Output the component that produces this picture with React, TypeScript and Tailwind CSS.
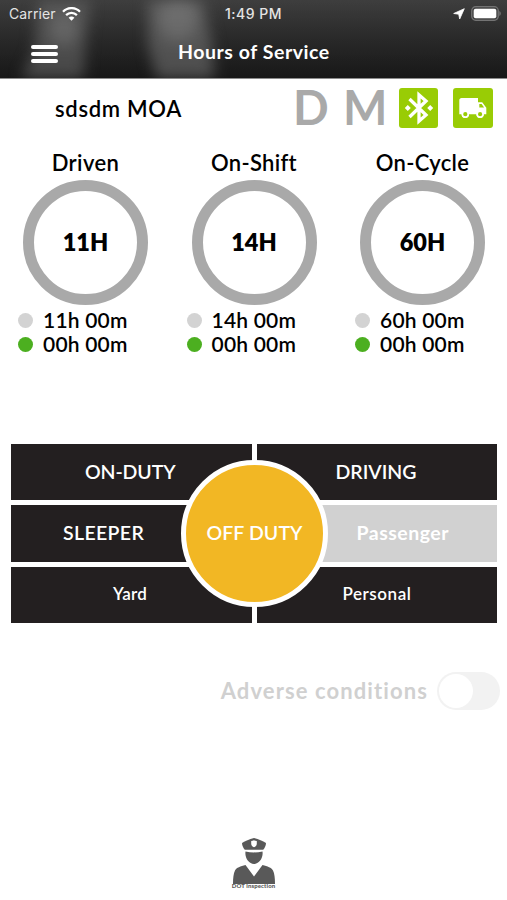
import { useState } from 'react'
import clsx from 'clsx'

type Gauge = {
    title: string
    titleClass: string
    limit: string
    remaining: string
    used: string
}

const gauges: Gauge[] = [
    { title: 'Driven', titleClass: 'tracking-[0.4px]', limit: '11H', remaining: '11h 00m', used: '00h 00m' },
    { title: 'On-Shift', titleClass: 'tracking-[0.3px]', limit: '14H', remaining: '14h 00m', used: '00h 00m' },
    { title: 'On-Cycle', titleClass: 'tracking-[0.3px]', limit: '60H', remaining: '60h 00m', used: '00h 00m' },
]

const duties = [
    { label: 'ON-DUTY', className: 'bg-[#231f20] pl-[74px] text-[19.5px] font-semibold tracking-[-0.1px]' },
    { label: 'DRIVING', className: 'bg-[#231f20] pl-[79px] text-[19.5px] font-semibold' },
    { label: 'SLEEPER', className: 'bg-[#231f20] pl-[52px] text-[19.5px] font-semibold tracking-[0.35px]' },
    { label: 'Passenger', className: 'bg-[#d1d1d1] pl-[100px] text-[19.5px] font-bold tracking-[0.5px]' },
    { label: 'Yard', className: 'bg-[#231f20] pl-[102px] text-[17px] font-semibold tracking-[0.3px]' },
    { label: 'Personal', className: 'bg-[#231f20] pl-[86px] text-[17px] font-semibold tracking-[0.55px]' },
]

function StatusBar() {
    return (
        <div className="relative flex h-[27px] items-center justify-between pl-[9px] pr-[6px] font-['Inter'] text-[14px] text-[#e4e4e4]">
            <div className="flex items-center gap-[6px]">
                <span className="tracking-[0.1px]">Carrier</span>
                <svg width="19" height="14" viewBox="0 0 19 14" fill="none" stroke="#fff" strokeWidth="2.3">
                    <path d="M1 4.8C5.8-.1 13.2-.1 18 4.8" />
                    <path d="M4.1 8.1c3.1-3 7.7-3 10.8 0" />
                    <path d="M6.600 10.700c1.600-1.500 4.200-1.500 5.800 0L9.500 13.700Z" fill="#fff" stroke="none" />
                </svg>
            </div>
            <span className="absolute left-[225px] font-medium tracking-[0.5px]">1:49 PM</span>
            <div className="flex items-center gap-[6px]">
                <svg width="12" height="12" viewBox="0 0 12 12" fill="#fff" stroke="#fff" strokeWidth=".8" strokeLinejoin="round">
                    <path d="M11.300.7 6.700 11 5.700 6.200.7 5.500Z" />
                </svg>
                <svg width="30" height="15" viewBox="0 0 30 15">
                    <rect x=".7" y=".7" width="26.6" height="13.6" rx="4" fill="#444" stroke="#747474" strokeWidth="1.2" />
                    <rect x="2.7" y="2.7" width="22.6" height="9.6" rx="2" fill="#fff" />
                    <path d="M28.3 5v5c2-.9 2-4.1 0-5Z" fill="#747474" />
                </svg>
            </div>
        </div>
    )
}

function Header() {
    return (
        <header className="relative h-[79px] overflow-hidden border-b border-[#8c8c8c] bg-linear-to-b from-[#3e3e3e] to-[#1e1e1e]">
            {/* out-of-focus backdrop */}
            <svg className="absolute inset-0 blur-[7px]" width="507" height="79" viewBox="0 0 507 79">
                <path d="M40-20h52l-6 60-4 60H12l22-50Z" fill="#575757" />
                <path d="M148-20h50l14 62 4 58h-54l-14-55Z" fill="#5e5e5e" />
                <ellipse cx="178" cy="20" rx="19" ry="22" fill="#717171" />
                <ellipse cx="64" cy="30" rx="14" ry="16" fill="#6c6c6c" />
            </svg>
            <div className="absolute inset-0 bg-linear-to-b from-transparent to-black/20" />
            <div className="relative">
                <StatusBar />
                <div className="flex h-[51px] items-center">
                    <button aria-label="Menu" className="ml-[31px] mt-[3px] flex w-[27px] flex-col gap-[3px]">
                        <span className="h-1 rounded-sm bg-white" />
                        <span className="h-1 rounded-sm bg-white" />
                        <span className="h-1 rounded-sm bg-white" />
                    </button>
                    <h1 className="-mt-px ml-[120px] whitespace-nowrap text-[19.5px] font-bold tracking-[0.55px] text-white">Hours of Service</h1>
                </div>
            </div>
        </header>
    )
}

function DriverRow() {
    return (
        <div className="flex h-[58px] items-center pl-[55px] pr-[14px]">
            <span className="w-[238px] text-[22px] font-semibold tracking-[0.7px]">sdsdm MOA</span>
            <span className="-mt-[2px] w-[50px] text-[47px] font-bold leading-none text-[#a9a9a9]">D</span>
            <span className="-mt-[2px] w-[56px] text-[47px] font-bold leading-none text-[#a9a9a9]">M</span>
            <div className="grid h-10 w-[39px] shrink-0 place-items-center rounded-[3px] bg-[#99cc05]">
                <svg width="30" height="34" viewBox="0 0 30 34" fill="none" stroke="#fff" strokeWidth="3.3">
                    <path d="m5.5 8 16.500 16-7 6.200V3.800l7 6.200L5.500 26" />
                    <path d="m3.800 14 3 3-3 3-3-3ZM26.200 14l3 3-3 3-3-3Z" fill="#fff" stroke="none" />
                </svg>
            </div>
            <div className="ml-[15px] grid h-10 w-10 shrink-0 place-items-center rounded-[3px] bg-[#99cc05]">
                <svg width="28" height="20" viewBox="0 0 28 20">
                    <path d="M2.500 0H19v4.300h4.200l4.100 5.400v6.600h-2.500a3.700 3.700 0 0 1-7.400 0H10a3.700 3.700 0 0 1-7.400 0H.3V2.200C.3 1 1.200 0 2.500 0Z" fill="#fff" />
                    <path d="M20.300 6h2.300l2.500 3.500h-4.800Z" fill="#99cc05" />
                    <circle cx="6.300" cy="16.200" r="2.900" fill="#99cc05" stroke="#fff" strokeWidth="1.600" />
                    <circle cx="21.100" cy="16.200" r="2.900" fill="#99cc05" stroke="#fff" strokeWidth="1.600" />
                </svg>
            </div>
        </div>
    )
}

function GaugeColumn({ gauge }: { gauge: Gauge }) {
    return (
        <div className="flex w-[125px] flex-col items-center">
            <h2 className={clsx('h-[43px] pt-[13px] text-[22px] font-semibold leading-[26px] whitespace-nowrap', gauge.titleClass)}>{gauge.title}</h2>
            <div className="grid h-[125px] w-[125px] place-items-center rounded-full border-[11px] border-[#a9a9a9] text-[23.5px] font-extrabold">
                {gauge.limit}
            </div>
            <div className="mt-[4px] flex w-[135px] flex-col text-[21px] font-semibold leading-[24px] tracking-[0.2px]">
                <div className="flex items-center gap-[10px]">
                    <span className="h-[15px] w-[15px] rounded-full bg-[#d3d3d3]" />
                    <span className="-mt-px">{gauge.remaining}</span>
                </div>
                <div className="flex items-center gap-[10px]">
                    <span className="mt-px h-[15px] w-[15px] rounded-full bg-[#4caf20]" />
                    <span>{gauge.used}</span>
                </div>
            </div>
        </div>
    )
}

function DutyPad() {
    return (
        <div className="relative mx-[11px] mt-[88px] grid h-[179px] w-[486px] grid-cols-2 grid-rows-3 gap-[5px]">
            {duties.map(d => (
                <button key={d.label} className={clsx('flex items-center whitespace-nowrap pb-[2px] text-white', d.className)}>
                    {d.label}
                </button>
            ))}
            <button className="absolute left-[170px] top-[16px] grid h-[147px] w-[147px] place-items-center rounded-full border-[5px] border-white bg-[#f2b724] pb-[2px] text-[19.5px] font-semibold tracking-[0.1px] text-white">
                OFF DUTY
            </button>
        </div>
    )
}

function Inspection() {
    return (
        <button className="mx-auto mt-[128px] flex w-[46px] flex-col items-center">
            <svg width="42" height="46" viewBox="0 0 42 46" fill="#595959">
                <path d="M21 0c5 1.200 8.500 3 12 5-.2 2.700-1 4.700-2.800 6.700H11.800C10 9.700 9.200 7.700 9 5c3.500-2 7-3.800 12-5Z" />
                <path d="M21 2.200c1 .6 1.800.8 2.800.8v2.800c0 1.700-1.300 2.800-2.800 3.500-1.500-.7-2.800-1.800-2.800-3.500V3c1 0 1.800-.2 2.800-.8Z" fill="#fff" />
                <path d="M12.500 13.500c5.500 1.200 11.500 1.200 17 0 1 6.500-3.500 12.500-8.500 12.500s-9.500-6-8.500-12.500Z" />
                <path d="M12.500 27c-5 1.500-9 2.500-10.500 5.500S0 40 0 46h42c0-6-.5-10.500-2-13.500S34.500 28.500 29.500 27L21 38.500Z" />
            </svg>
            <span className="-mt-px whitespace-nowrap text-[6px] font-black leading-[6px] tracking-[0.1px] text-[#595959]">DOT inspection</span>
        </button>
    )
}

export default function App() {
    const [adverse, setAdverse] = useState(false)

    return (
        <div className="h-[900px] w-[507px] overflow-hidden bg-white font-['Lato',sans-serif] text-black">
            <Header />
            <DriverRow />
            <div className="flex justify-between pl-[23px] pr-[22px]">
                {gauges.map(g => (
                    <GaugeColumn key={g.title} gauge={g} />
                ))}
            </div>
            <DutyPad />
            <div className="mt-[49px] flex h-[38px] items-center justify-end gap-[9px] pr-[7px]">
                <span className="-mt-[2px] text-[22px] font-bold tracking-[1.1px] text-[#d0d0d0]">Adverse conditions</span>
                <button
                    role="switch"
                    aria-checked={adverse}
                    aria-label="Adverse conditions"
                    onClick={() => setAdverse(!adverse)}
                    className={clsx('flex h-[38px] w-[63px] items-center rounded-full bg-[#f2f2f2] p-[2px]', adverse && 'justify-end')}
                >
                    <span className="h-[34px] w-[34px] rounded-full bg-white" />
                </button>
            </div>
            <Inspection />
        </div>
    )
}
